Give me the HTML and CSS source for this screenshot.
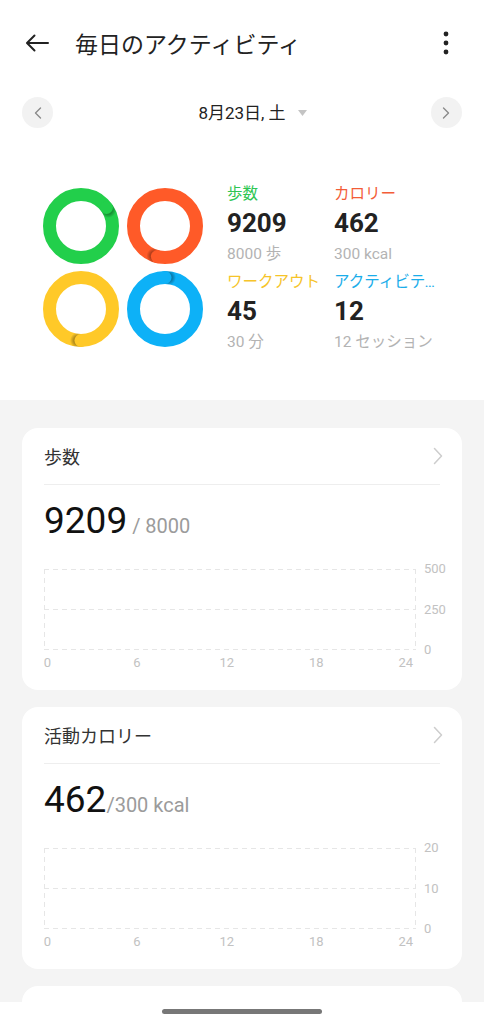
FILE: index.html
```html
<!DOCTYPE html>
<html lang="ja">
<head>
<meta charset="utf-8">
<title>毎日のアクティビティ</title>
<link rel="stylesheet" href="styles.css">
</head>
<body>
<div class="page">
  <section class="top">
    <header class="appbar">
      <svg class="back" width="24" height="24" viewBox="0 0 24 24"><path d="M23 12H2.5M9.5 4.5L2 12l7.5 7.5" fill="none" stroke="#222" stroke-width="2" stroke-linecap="round" stroke-linejoin="round"/></svg>
      <h1 class="title">毎日のアクティビティ</h1>
      <svg class="more" width="6" height="24" viewBox="0 0 6 24"><circle cx="3" cy="3" r="2.4" fill="#222"/><circle cx="3" cy="12" r="2.4" fill="#222"/><circle cx="3" cy="21" r="2.4" fill="#222"/></svg>
    </header>

    <div class="daterow">
      <div class="navbtn"><svg width="8" height="12" viewBox="0 0 8 12"><path d="M6.5 1L1.5 6l5 5" fill="none" stroke="#8a8a8a" stroke-width="1.4" stroke-linecap="round" stroke-linejoin="round"/></svg></div>
      <div class="date"><span class="date-text">8月23日, 土</span><svg class="caret" width="9" height="6" viewBox="0 0 9 6"><path d="M0 0h9L4.5 6z" fill="#c4c4c4"/></svg></div>
      <div class="navbtn"><svg width="8" height="12" viewBox="0 0 8 12"><path d="M1.5 1l5 5-5 5" fill="none" stroke="#8a8a8a" stroke-width="1.4" stroke-linecap="round" stroke-linejoin="round"/></svg></div>
    </div>

    <div class="summary">
      <div class="rings">
        <svg class="ring" width="76" height="76" viewBox="0 0 76 76">
          <defs>
            <mask id="m1"><circle cx="38" cy="38" r="31.5" fill="none" stroke="#fff" stroke-width="13"/></mask>
            <radialGradient id="g1"><stop offset="0.55" stop-color="#000" stop-opacity="0.3"/><stop offset="1" stop-color="#000" stop-opacity="0"/></radialGradient>
          </defs>
          <circle cx="38" cy="38" r="31.5" fill="none" stroke="#22cf4b" stroke-width="13"/>
          <g mask="url(#m1)">
            <circle cx="65.2" cy="21.9" r="8" fill="url(#g1)"/>
            <circle cx="63.48" cy="19.48" r="6.5" fill="#22cf4b"/>
          </g>
        </svg>
        <svg class="ring" width="76" height="76" viewBox="0 0 76 76">
          <defs>
            <mask id="m2"><circle cx="38" cy="38" r="31.5" fill="none" stroke="#fff" stroke-width="13"/></mask>
            <radialGradient id="g2"><stop offset="0.55" stop-color="#000" stop-opacity="0.3"/><stop offset="1" stop-color="#000" stop-opacity="0"/></radialGradient>
          </defs>
          <circle cx="38" cy="38" r="31.5" fill="none" stroke="#ff5a28" stroke-width="13"/>
          <g mask="url(#m2)">
            <circle cx="27.5" cy="67.8" r="8" fill="url(#g2)"/>
            <circle cx="30.38" cy="68.56" r="6.5" fill="#ff5a28"/>
          </g>
        </svg>
        <svg class="ring" width="76" height="76" viewBox="0 0 76 76">
          <defs>
            <mask id="m3"><circle cx="38" cy="38" r="31.5" fill="none" stroke="#fff" stroke-width="13"/></mask>
            <radialGradient id="g3"><stop offset="0.55" stop-color="#000" stop-opacity="0.3"/><stop offset="1" stop-color="#000" stop-opacity="0"/></radialGradient>
          </defs>
          <circle cx="38" cy="38" r="31.5" fill="none" stroke="#ffc928" stroke-width="13"/>
          <g mask="url(#m3)">
            <circle cx="35" cy="69.4" r="8" fill="url(#g3)"/>
            <circle cx="38" cy="69.5" r="6.5" fill="#ffc928"/>
          </g>
        </svg>
        <svg class="ring" width="76" height="76" viewBox="0 0 76 76">
          <defs>
            <mask id="m4"><circle cx="38" cy="38" r="31.5" fill="none" stroke="#fff" stroke-width="13"/></mask>
            <radialGradient id="g4"><stop offset="0.55" stop-color="#000" stop-opacity="0.3"/><stop offset="1" stop-color="#000" stop-opacity="0"/></radialGradient>
          </defs>
          <circle cx="38" cy="38" r="31.5" fill="none" stroke="#0db1f7" stroke-width="13"/>
          <g mask="url(#m4)">
            <circle cx="41" cy="6.6" r="8" fill="url(#g4)"/>
            <circle cx="38" cy="6.5" r="6.5" fill="#0db1f7"/>
          </g>
        </svg>
      </div>

      <div class="stats">
        <div class="stat">
          <div class="stat-label green">歩数</div>
          <div class="stat-value">9209</div>
          <div class="stat-sub">8000 歩</div>
        </div>
        <div class="stat">
          <div class="stat-label orange">カロリー</div>
          <div class="stat-value">462</div>
          <div class="stat-sub">300 kcal</div>
        </div>
        <div class="stat">
          <div class="stat-label yellow">ワークアウト</div>
          <div class="stat-value">45</div>
          <div class="stat-sub">30 分</div>
        </div>
        <div class="stat">
          <div class="stat-label blue">アクティビティ時間</div>
          <div class="stat-value">12</div>
          <div class="stat-sub">12 セッション</div>
        </div>
      </div>
    </div>
  </section>

  <section class="cards">
    <article class="card">
      <div class="card-head">
        <h2 class="card-title">歩数</h2>
        <svg class="chev" width="10" height="18" viewBox="0 0 10 18"><path d="M1.5 1.5L8.5 9l-7 7.5" fill="none" stroke="#cdcdcd" stroke-width="1.5" stroke-linecap="round" stroke-linejoin="round"/></svg>
      </div>
      <div class="card-value"><span class="big">9209</span><span class="goal"> / 8000</span></div>
      <div class="chart">
        <svg class="plot" width="372" height="81" viewBox="0 0 372 81">
          <g fill="none" stroke="#e6e6e6" stroke-width="1" stroke-dasharray="5 4">
            <path d="M0 0.5H372M0 40.5H372M0 80.5H372M0.5 0V81M371.5 0V81"/>
          </g>
        </svg>
        <div class="ylabels"><span>500</span><span>250</span><span>0</span></div>
        <div class="xlabels"><span>0</span><span>6</span><span>12</span><span>18</span><span>24</span></div>
      </div>
    </article>

    <article class="card">
      <div class="card-head">
        <h2 class="card-title">活動カロリー</h2>
        <svg class="chev" width="10" height="18" viewBox="0 0 10 18"><path d="M1.5 1.5L8.5 9l-7 7.5" fill="none" stroke="#cdcdcd" stroke-width="1.5" stroke-linecap="round" stroke-linejoin="round"/></svg>
      </div>
      <div class="card-value"><span class="big">462</span><span class="goal">/300 kcal</span></div>
      <div class="chart">
        <svg class="plot" width="372" height="81" viewBox="0 0 372 81">
          <g fill="none" stroke="#e6e6e6" stroke-width="1" stroke-dasharray="5 4">
            <path d="M0 0.5H372M0 40.5H372M0 80.5H372M0.5 0V81M371.5 0V81"/>
          </g>
        </svg>
        <div class="ylabels"><span>20</span><span>10</span><span>0</span></div>
        <div class="xlabels"><span>0</span><span>6</span><span>12</span><span>18</span><span>24</span></div>
      </div>
    </article>

    <article class="card card-stub"></article>
  </section>
</div>

<div class="navbar"><div class="home-indicator"></div></div>
</body>
</html>
```

FILE: styles.css
```css
* { box-sizing: border-box; }

html, body {
  margin: 0;
  padding: 0;
}

body {
  background: #f4f4f4;
  font-family: Roboto, "Noto Sans CJK JP", "Noto Sans", sans-serif;
  color: #222;
}

h1, h2 { margin: 0; font-weight: 400; }

.top {
  background: #fff;
  padding-bottom: 48px;
}

.appbar {
  height: 86px;
  display: flex;
  align-items: center;
  padding: 0 35px 0 25px;
}

.back { flex: none; }

.title {
  flex: 1;
  margin-left: 26px;
  font-size: 23px;
  line-height: 30px;
  color: #222;
  font-family: "Noto Sans CJK JP", sans-serif;
}

.more { flex: none; }

.daterow {
  margin-top: 11px;
  height: 31px;
  padding: 0 22px;
  display: flex;
  align-items: center;
  justify-content: space-between;
}

.navbtn {
  width: 31px;
  height: 31px;
  border-radius: 50%;
  background: #f2f2f2;
  display: flex;
  align-items: center;
  justify-content: center;
}

.date {
  display: flex;
  align-items: center;
  padding-left: 21px;
}

.date-text {
  font-size: 17px;
  line-height: 22px;
  color: #222;
}

.caret { margin-left: 12px; }

.summary {
  margin-top: 56px;
  display: flex;
  align-items: flex-start;
  padding-left: 43px;
}

.rings {
  margin-top: 4px;
  display: grid;
  grid-template-columns: 76px 76px;
  column-gap: 8px;
  row-gap: 7px;
}

.ring { display: block; }

.stats {
  margin-left: 24px;
  display: grid;
  grid-template-columns: 107px 106px;
  row-gap: 8px;
}

.stat { display: flex; flex-direction: column; min-width: 0; }

.stat-label {
  font-size: 15.5px;
  line-height: 20px;
  white-space: nowrap;
  overflow: hidden;
  text-overflow: ellipsis;
}

.green { color: #2fc653; }
.orange { color: #f35d38; }
.yellow { color: #f6c42a; }
.blue { color: #1badea; }

.stat-value {
  margin-top: 4px;
  font-size: 26px;
  line-height: 30px;
  font-weight: 700;
  color: #222;
}

.stat-sub {
  margin-top: 6px;
  font-size: 15.5px;
  line-height: 20px;
  color: #b3b3b3;
  white-space: nowrap;
}

.cards {
  padding: 28px 22px 40px;
  display: flex;
  flex-direction: column;
  gap: 17px;
}

.card {
  background: #fff;
  border-radius: 16px;
  padding: 0 22px 20px;
}

.card-stub { height: 120px; }

.card-head {
  height: 57px;
  display: flex;
  align-items: center;
  justify-content: space-between;
  border-bottom: 1px solid #eeeeee;
  padding-bottom: 1px;
}

.card-title {
  font-size: 18px;
  line-height: 24px;
  color: #333;
  font-family: "Noto Sans CJK JP", sans-serif;
}

.chev { margin-right: -3px; }

.card-value {
  margin-top: 14px;
  height: 44px;
  line-height: 44px;
  white-space: nowrap;
}

.big {
  font-size: 37px;
  color: #111;
  font-weight: 400;
}

.goal {
  font-size: 20px;
  color: #9b9b9b;
}

.chart {
  margin-top: 26px;
  display: grid;
  grid-template-columns: 372px 1fr;
}

.plot { display: block; }

.ylabels {
  margin: -7px 0;
  padding-left: 8px;
  display: flex;
  flex-direction: column;
  justify-content: space-between;
  font-size: 13px;
  line-height: 14px;
  color: #c2c2c2;
}

.xlabels {
  grid-column: 1 / 2;
  margin-top: 6px;
  margin-left: -3.5px;
  display: flex;
  gap: 75.5px;
  font-size: 13px;
  line-height: 14px;
  color: #c2c2c2;
}

.xlabels span {
  width: 14px;
  text-align: center;
}

.navbar {
  position: fixed;
  left: 0;
  right: 0;
  bottom: 0;
  height: 22px;
  background: #fff;
}

.home-indicator {
  width: 160px;
  height: 5px;
  margin: 7px auto 0;
  border-radius: 3px;
  background: #777;
}
```
